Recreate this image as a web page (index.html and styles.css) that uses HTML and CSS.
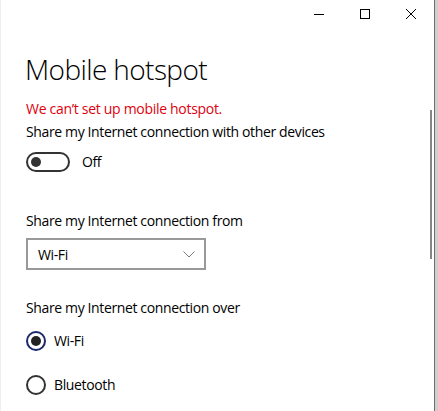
FILE: index.html
```html
<!DOCTYPE html>
<html lang="en">
<head>
<meta charset="utf-8">
<title>Mobile hotspot</title>
<link rel="stylesheet" href="styles.css">
</head>
<body>
<div class="window">
  <div class="main">
    <div class="titlebar">
      <div class="tb-btn" aria-label="Minimize">
        <svg width="10" height="10" viewBox="0 0 10 10"><line x1="0" y1="5.5" x2="10" y2="5.5" stroke="#000" stroke-width="1"/></svg>
      </div>
      <div class="tb-btn" aria-label="Maximize">
        <svg width="10" height="10" viewBox="0 0 10 10"><rect x="0.5" y="0.5" width="9" height="9" fill="none" stroke="#000" stroke-width="1"/></svg>
      </div>
      <div class="tb-btn" aria-label="Close">
        <svg width="10" height="10" viewBox="0 0 10 10"><path d="M0 0 L10 10 M10 0 L0 10" stroke="#000" stroke-width="1"/></svg>
      </div>
    </div>
    <div class="content">
      <h1 class="title">Mobile hotspot</h1>
      <p class="error">We can’t set up mobile hotspot.</p>
      <p class="label">Share my Internet connection with other devices</p>
      <div class="toggle-row">
        <span class="toggle"><span class="knob"></span></span>
        <span class="toggle-text">Off</span>
      </div>
      <p class="label from">Share my Internet connection from</p>
      <div class="select">
        <span>Wi-Fi</span>
        <svg class="chev" width="12" height="7" viewBox="0 0 12 7"><polyline points="0.5,0.5 6,6 11.5,0.5" fill="none" stroke="#7a7a7a" stroke-width="1"/></svg>
      </div>
      <p class="label over">Share my Internet connection over</p>
      <div class="radio-row first">
        <span class="radio checked"><span class="dot"></span></span>
        <span>Wi-Fi</span>
      </div>
      <div class="radio-row second">
        <span class="radio"></span>
        <span>Bluetooth</span>
      </div>
    </div>
    <div class="scroll-thumb"></div>
  </div>
  <div class="edge-dark"></div>
  <div class="edge-light"></div>
</div>
</body>
</html>
```

FILE: styles.css
```css
* { box-sizing: border-box; }
html, body {
  margin: 0;
  padding: 0;
  background: #fff;
}
body {
  font-family: "Segoe UI", "Open Sans", "Noto Sans", sans-serif;
  color: #000;
}
.window {
  display: flex;
  width: 438px;
  height: 411px;
  overflow: hidden;
  border-left: 1px solid #efefef;
}
.main {
  position: relative;
  width: 433px;
  height: 411px;
  background: #fff;
}
.edge-dark {
  width: 1px;
  background: #6e6e6e;
}
.edge-light {
  width: 3px;
  background: #cfcfcf;
}
.titlebar {
  display: flex;
  justify-content: flex-end;
  height: 28px;
}
.tb-btn {
  width: 46px;
  height: 28px;
  display: flex;
  align-items: center;
  justify-content: center;
}
.tb-btn svg { display: block; }
.content {
  padding-left: 25px;
  display: flex;
  flex-direction: column;
  align-items: flex-start;
}
.title {
  margin: 23px 0 0 -1px;
  font-size: 28px;
  font-weight: 300;
  line-height: 36px;
  letter-spacing: -0.6px;
}
.error {
  margin: 12px 0 0;
  font-size: 14px;
  line-height: 20px;
  letter-spacing: -0.3px;
  color: #e0000f;
}
.label {
  margin: 3px 0 0;
  font-size: 14px;
  line-height: 20px;
  letter-spacing: -0.37px;
}
.toggle-row {
  margin-top: 10px;
  display: flex;
  align-items: center;
  gap: 12px;
  font-size: 14px;
  line-height: 20px;
  letter-spacing: -0.37px;
}
.toggle {
  width: 44px;
  height: 20px;
  border: 2px solid #333;
  border-radius: 10px;
  display: flex;
  align-items: center;
  padding-left: 3px;
}
.knob {
  width: 10px;
  height: 10px;
  border-radius: 50%;
  background: #333;
}
.label.from { margin-top: 39px; }
.select {
  margin-top: 7px;
  width: 180px;
  height: 32px;
  border: 2px solid #999;
  display: flex;
  align-items: center;
  justify-content: space-between;
  padding: 0 9px 0 10px;
  font-size: 14px;
  letter-spacing: -0.37px;
}
.chev { display: block; }
.label.over { margin-top: 28px; }
.radio-row {
  display: flex;
  align-items: center;
  gap: 8px;
  font-size: 14px;
  line-height: 20px;
  letter-spacing: -0.37px;
}
.radio-row.first { margin-top: 13px; }
.radio-row.second { margin-top: 24px; }
.radio {
  width: 20px;
  height: 20px;
  border: 2px solid #333;
  border-radius: 50%;
  display: flex;
  align-items: center;
  justify-content: center;
}
.radio.checked { border-color: #1b2a6c; }
.dot {
  width: 10px;
  height: 10px;
  border-radius: 50%;
  background: #222;
}
.scroll-thumb {
  position: absolute;
  left: 429px;
  top: 110px;
  width: 2px;
  height: 149px;
  background: #868686;
}
```
